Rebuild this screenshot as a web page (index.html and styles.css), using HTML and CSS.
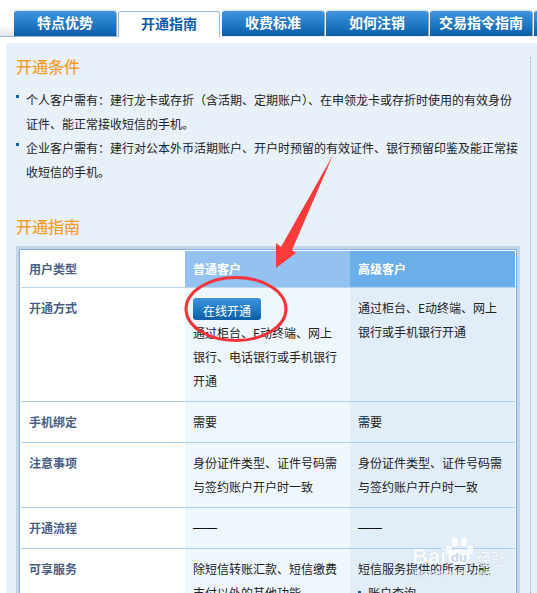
FILE: index.html
```html
<!DOCTYPE html>
<html lang="zh-CN">
<head>
<meta charset="utf-8">
<title>开通指南</title>
<link rel="stylesheet" href="styles.css">
</head>
<body>
<nav class="tabs">
  <a class="tab">特点优势</a>
  <a class="tab active">开通指南</a>
  <a class="tab">收费标准</a>
  <a class="tab">如何注销</a>
  <a class="tab">交易指令指南</a>
  <a class="tab">常见问题及解答</a>
</nav>
<div class="panel">
  <main class="main">
    <h2 class="title">开通条件</h2>
    <ul class="conds">
      <li><span>个人客户需有：建行龙卡或存折（含活期、定期账户）、在申领龙卡或存折时使用的有效身份证件、能正常接收短信的手机。</span></li>
      <li><span>企业客户需有：建行对公本外币活期账户、开户时预留的有效证件、银行预留印鉴及能正常接收短信的手机。</span></li>
    </ul>
    <h2 class="title second">开通指南</h2>
    <div class="frame">
      <div class="frame-inner">
        <table class="guide">
          <colgroup><col class="c1"><col class="c2"><col class="c3"></colgroup>
          <thead>
            <tr>
              <th class="label">用户类型</th>
              <th class="h2">普通客户</th>
              <th class="h3">高级客户</th>
            </tr>
          </thead>
          <tbody>
            <tr>
              <td class="label">开通方式</td>
              <td class="v2"><a class="btn">在线开通</a>通过柜台、E动终端、网上银行、电话银行或手机银行开通</td>
              <td class="v3">通过柜台、E动终端、网上银行或手机银行开通</td>
            </tr>
            <tr>
              <td class="label">手机绑定</td>
              <td class="v2">需要</td>
              <td class="v3">需要</td>
            </tr>
            <tr>
              <td class="label">注意事项</td>
              <td class="v2">身份证件类型、证件号码需与签约账户开户时一致</td>
              <td class="v3">身份证件类型、证件号码需与签约账户开户时一致</td>
            </tr>
            <tr>
              <td class="label">开通流程</td>
              <td class="v2 dash">——</td>
              <td class="v3 dash">——</td>
            </tr>
            <tr>
              <td class="label">可享服务</td>
              <td class="v2">除短信转账汇款、短信缴费支付以外的其他功能</td>
              <td class="v3">短信服务提供的所有功能
                <ul class="services"><li>账户查询</li></ul>
              </td>
            </tr>
          </tbody>
        </table>
      </div>
    </div>
  </main>
</div>

<svg class="marks" width="537" height="593" viewBox="0 0 537 593" aria-hidden="true">
  <ellipse cx="236" cy="309" rx="50" ry="31.5" fill="none" stroke="#f4333b" stroke-width="3"/>
  <polygon points="333,155 292,250 296,253 276,268 276,243 281,247" fill="#fb3a3a"/>
</svg>

<div class="watermark" aria-hidden="true">
  <div class="wm-row">
    <span class="wm-bai">Bai</span>
    <span class="wm-pawbox">
      <svg class="wm-paw" width="30" height="30" viewBox="0 0 30 30">
        <ellipse cx="5" cy="14" rx="3.2" ry="4.5"/>
        <ellipse cx="11" cy="6" rx="3.4" ry="5"/>
        <ellipse cx="20" cy="6" rx="3.4" ry="5"/>
        <ellipse cx="26" cy="14" rx="3.2" ry="4.5"/>
        <ellipse cx="15" cy="21" rx="10.5" ry="8"/>
      </svg>
      <span class="wm-du">du</span>
    </span>
    <span class="wm-cn">经验</span>
  </div>
  <div class="wm-url">jingyan.baidu.com</div>
</div>
</body>
</html>
```

FILE: styles.css
```css
html, body {
  margin: 0;
  padding: 0;
  height: 593px;
  overflow: hidden;
  background: #fff;
}

body {
  position: relative;
  font-family: "Noto Sans CJK SC", "Liberation Sans", sans-serif;
  font-size: 12px;
  line-height: 24px;
  color: #222;
}

.tabs {
  display: flex;
  align-items: flex-start;
  gap: 2px;
  width: 640px;
  height: 26px;
  margin-top: 11px;
  padding-left: 14px;
  background:
    linear-gradient(#8fbce8, #8fbce8) left bottom / 118px 1px no-repeat,
    linear-gradient(#fff 55%, #e6e6e6) left top / 14px 25px no-repeat;
}

.tab {
  flex: none;
  display: flex;
  align-items: center;
  justify-content: center;
  width: 102px;
  height: 25px;
  padding-bottom: 3px;
  box-sizing: border-box;
  border-radius: 3px 3px 0 0;
  background: linear-gradient(#3d96df, #0a5ea9);
  box-shadow: 1px 0 1px #9a9a9a, 0 -1px 2px #ddd;
  color: #fff;
  font-size: 14px;
  font-weight: 700;
  line-height: 20px;
  white-space: nowrap;
}

.tab.active {
  height: 26px;
  background: #fff;
  border: 1px solid #8fbce8;
  border-bottom: 0;
  box-shadow: none;
  color: #0a5ea9;
}

.panel {
  width: 531px;
  margin: 6px 0 0 6px;
  padding-top: 14px;
  background: #e8f0fa;
  border-radius: 2px 0 0 0;
  box-sizing: border-box;
}

.main {
  width: 514px;
  min-height: 600px;
  padding-left: 10px;
  border-right: 1px dotted #8aaed6;
}

.title {
  margin: 0;
  font-size: 16px;
  font-weight: 400;
  line-height: 18px;
  color: #f79a22;
  -webkit-text-stroke: 0.2px #f79a22;
}

.title.second {
  margin-top: 33px;
}

.conds {
  list-style: none;
  margin: 13px 0 0;
  padding: 0;
  width: 504px;
}

.conds li {
  display: flex;
  gap: 7px;
}

.conds li::before {
  content: "";
  flex: none;
  width: 3px;
  height: 3px;
  margin-top: 7px;
  background: #0a5ea9;
}

.frame {
  width: 498px;
  margin-top: 11px;
  border: 3px solid #c5d5e8;
}

.frame-inner {
  border: 1px solid #7fb0e5;
  padding: 1px 1px 0;
  background: #fff;
}

.guide {
  width: 494px;
  table-layout: fixed;
  border-collapse: collapse;
  border-spacing: 0;
}

.c1 { width: 164px; }
.c2 { width: 165px; }
.c3 { width: 165px; }

.guide th,
.guide td {
  padding: 8px 12px 8px 8px;
  vertical-align: top;
  text-align: left;
  border-bottom: 1px solid #a9cfee;
}

.guide th {
  padding-top: 6px;
  padding-bottom: 6px;
  font-weight: 700;
  border-bottom-color: #bcd6e8;
}

.guide .label {
  font-weight: 700;
  color: #4a5f85;
}

.h2 { background: #94c2f0; color: #fff; }
.h3 { background: #6aaeea; color: #fff; }
.v2 { background: #eff7fe; }
.v3 { background: #e1edf9; }

.guide .dash {
  font-family: "Liberation Sans", sans-serif;
  color: #111;
}

.btn {
  display: block;
  width: 68px;
  height: 22px;
  margin: 2px 0 1px;
  padding-top: 6px;
  box-sizing: border-box;
  border-radius: 3px;
  background: linear-gradient(#3d96df, #0a5ea9);
  color: #fff;
  text-align: center;
  line-height: 14px;
}

.services {
  list-style: none;
  margin: 0;
  padding: 0;
}

.services li {
  display: flex;
  gap: 7px;
}

.services li::before {
  content: "";
  flex: none;
  width: 3px;
  height: 3px;
  margin-top: 10px;
  background: #0a5ea9;
}

.marks {
  position: absolute;
  left: 0;
  top: 0;
  pointer-events: none;
}

.watermark {
  position: absolute;
  left: 412px;
  top: 535px;
  width: 100px;
  color: #fff;
  opacity: 0.8;
  pointer-events: none;
}

.wm-row {
  display: flex;
  align-items: flex-end;
  height: 33px;
}

.wm-bai {
  width: 32px;
  font-family: "Liberation Sans", sans-serif;
  font-size: 22px;
  font-weight: 700;
  line-height: 22px;
  text-shadow: 0 0 1px #a9b8cc;
}

.wm-pawbox {
  flex: none;
  display: grid;
  width: 30px;
  height: 30px;
  margin-bottom: 2px;
}

.wm-paw {
  grid-area: 1 / 1;
  fill: #fff;
}

.wm-du {
  grid-area: 1 / 1;
  align-self: end;
  justify-self: center;
  font-family: "Liberation Sans", sans-serif;
  font-size: 13px;
  font-weight: 700;
  line-height: 16px;
  color: #c3d3e6;
}

.wm-cn {
  margin-left: 1px;
  font-size: 16px;
  line-height: 20px;
  text-shadow: 0 0 1px #a9b8cc;
}

.wm-url {
  font-family: "Liberation Sans", sans-serif;
  font-size: 10px;
  line-height: 12px;
  white-space: nowrap;
  text-shadow: 0 0 1px #a9b8cc;
}
```
